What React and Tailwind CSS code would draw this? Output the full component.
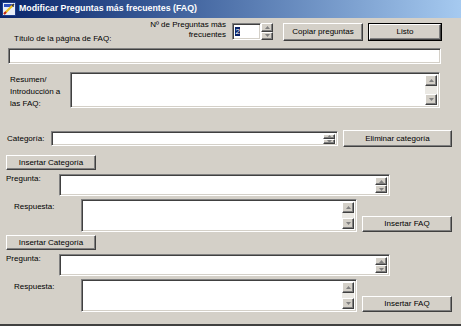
import React from 'react';

const raised =
  'border border-t-white border-l-white border-r-[#404040] border-b-[#404040] shadow-[inset_-1px_-1px_0_#808080] bg-[#d4d0c8]';
const sunken =
  'border border-t-[#808080] border-l-[#808080] border-r-white border-b-white shadow-[inset_1px_1px_0_#404040,inset_-1px_-1px_0_#d4d0c8] bg-white';

const Arrow = ({ down = false }) => (
  <svg width="5" height="3" viewBox="0 0 5 3">
    {down ? <polygon points="0,0 5,0 2.5,3" fill="#808080" /> : <polygon points="0,3 5,3 2.5,0" fill="#808080" />}
  </svg>
);

const ArrowBtn = ({ down, className = '' }) => (
  <div className={`${raised} flex items-center justify-center ${className}`}>
    <Arrow down={down} />
  </div>
);

const Btn = ({ children, className = '', def = false }) => {
  const btn = (
    <div className={`${raised} flex items-center justify-center text-black ${def ? 'w-full h-full' : className}`}>
      {children}
    </div>
  );
  if (def) return <div className={`border border-black ${className}`}>{btn}</div>;
  return btn;
};

// text field with a scroll column at the right
const ScrollField = ({ className = '', track = true }) => (
  <div className={`${sunken} flex justify-end p-[2px] ${className}`}>
    {track ? (
      <div className="w-[12px] h-full flex flex-col bg-[#ebe9e4]">
        <ArrowBtn className="h-[11px]" />
        <div className="flex-1" />
        <ArrowBtn down className="h-[11px]" />
      </div>
    ) : (
      <div className="w-[12px] h-full flex flex-col">
        <ArrowBtn className="flex-1" />
        <ArrowBtn down className="flex-1" />
      </div>
    )}
  </div>
);

export default function App() {
  return (
    <div
      className="w-[461px] h-[326px] flex flex-col bg-[#d4d0c8] text-[8px] text-black"
      style={{ fontFamily: '"Liberation Sans", Arial, sans-serif' }}
    >
      <div className="h-[18px] flex items-center pl-[2px] bg-gradient-to-r from-[#0a246a] to-[#a6caf0]">
        <svg width="14" height="14" viewBox="0 0 14 14">
          <rect x="0.5" y="0.5" width="13" height="13" fill="#e8eef8" stroke="#1c3c8c" />
          <rect x="2" y="2" width="10" height="3" fill="#3050c0" />
          <line x1="2" y1="12" x2="11" y2="3" stroke="#f0c020" strokeWidth="2.2" />
          <line x1="2" y1="12" x2="4" y2="10" stroke="#c02020" strokeWidth="2" />
          <line x1="10" y1="4" x2="12" y2="2" stroke="#303030" strokeWidth="1.5" />
        </svg>
        <span className="ml-[3px] text-white font-bold text-[8.8px]">Modificar Preguntas más frecuentes (FAQ)</span>
      </div>

      <div className="flex-1 flex flex-col border-b-2 border-b-[#404040]">
        {/* row 1 */}
        <div className="flex h-[30px]">
          <div className="w-[226px] flex justify-between">
            <span className="self-end mb-[3px] ml-[14px]">Título de la página de FAQ:</span>
            <span className="mt-[2px] text-right leading-[10px]">
              Nº de Preguntas más
              <br />
              frecuentes
            </span>
          </div>
          <div className="ml-[6px] mt-[5px] flex h-[17px]">
            <div className={`${sunken} w-[29px] h-full pl-[2px] pt-[2px]`}>
              <span className="bg-[#0a246a] text-white leading-[9px] inline-block px-[0.5px]">2</span>
            </div>
            <div className="w-[12px] h-full flex flex-col">
              <ArrowBtn className="flex-1" />
              <ArrowBtn down className="flex-1" />
            </div>
          </div>
          <Btn className="ml-[10px] mt-[5px] w-[80px] h-[18px]">Copiar preguntas</Btn>
          <Btn def className="ml-[5px] mt-[5px] w-[74px] h-[18px]">Listo</Btn>
        </div>

        {/* title input */}
        <div className={`${sunken} ml-[8px] w-[433px] h-[16px]`} />

        {/* resumen */}
        <div className="flex mt-[8px]">
          <div className="w-[70px] pl-[10px] pt-[2px] leading-[12px]">
            Resumen/
            <br />
            Introducción a
            <br />
            las FAQ:
          </div>
          <ScrollField className="w-[370px] h-[36px]" />
        </div>

        {/* categoria */}
        <div className="flex items-center mt-[20px] h-[17px]">
          <span className="w-[44px] ml-[7px]">Categoría:</span>
          <ScrollField track={false} className="w-[287px] h-[15px]" />
          <Btn className="ml-[5px] w-[109px] h-[17px]">Eliminar categoría</Btn>
        </div>

        {[0, 1].map((i) => (
          <div key={i} className="flex flex-col">
            <Btn className={`${i === 0 ? 'mt-[8px]' : 'mt-[3px]'} ml-[6px] w-[90px] h-[15px]`}>Insertar Categoría</Btn>
            <div className="flex mt-[4px]">
              <span className="w-[53px] ml-[6px] -mt-[1px]">Pregunta:</span>
              <ScrollField track={false} className="w-[331px] h-[22px]" />
            </div>
            <div className="flex mt-[3px]">
              <span className="w-[67px] ml-[14px] pt-[2px]">Respuesta:</span>
              <ScrollField className="w-[276px] h-[33px]" />
              <Btn className="ml-[5px] self-end w-[90px] h-[16px]">Insertar FAQ</Btn>
            </div>
          </div>
        ))}
      </div>
    </div>
  );
}
